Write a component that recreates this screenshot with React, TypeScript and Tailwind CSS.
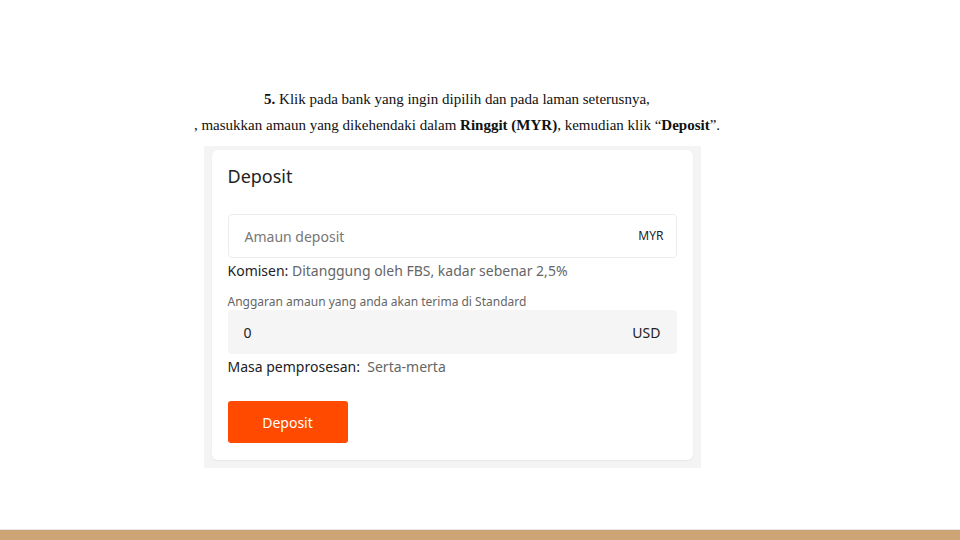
export default function App() {
  return (
    <div className="flex h-[540px] w-[960px] flex-col bg-white">
      <div className="flex flex-1 flex-col items-center pr-[46px] pt-[86px]">
        <div className="text-center font-['Liberation_Serif',serif] text-[15px] leading-[26px] text-[#111]">
          <p>
            <b>5.</b> Klik pada bank yang ingin dipilih dan pada laman seterusnya,
          </p>
          <p>
            , masukkan amaun yang dikehendaki dalam <b>Ringgit (MYR)</b>, kemudian klik “<b>Deposit</b>”.
          </p>
        </div>

        <div className="mr-[10px] mt-[8px] w-[497px] bg-[#f4f4f4] px-[8px] pb-[8px] pt-[4px] font-['Noto_Sans','Open_Sans',sans-serif]">
          <div className="rounded-[6px] bg-white px-[16px] pb-[17px] pt-[12px] shadow-[0_1px_2px_rgba(0,0,0,0.06)]">
            <h1 className="text-[18px] leading-[28px] text-[#222]">Deposit</h1>

            <div className="mt-[24px] flex h-[44px] items-center justify-between rounded-[4px] border border-[#ececec] pl-[16px] pr-[12px]">
              <span className="text-[14px] text-[#777]">Amaun deposit</span>
              <span className="text-[12px] text-[#222]">MYR</span>
            </div>

            <p className="mt-[3px] text-[14px] leading-[20px] text-[#222]">
              Komisen: <span className="text-[#666]">Ditanggung oleh FBS, kadar sebenar 2,5%</span>
            </p>

            <p className="mt-[13px] text-[12px] leading-[16px] text-[#666]">
              Anggaran amaun yang anda akan terima di Standard
            </p>

            <div className="flex h-[44px] items-center justify-between rounded-[4px] bg-[#f5f5f5] px-[16px]">
              <span className="text-[14px] text-[#222]">0</span>
              <span className="text-[14px] text-[#222]">USD</span>
            </div>

            <p className="mt-[1px] text-[14px] leading-[24px] text-[#222]">
              Masa pemprosesan:&nbsp; <span className="text-[#666]">Serta-merta</span>
            </p>

            <button className="mt-[22px] flex h-[42px] w-[120px] items-center justify-center rounded-[3px] bg-[#ff4a00] text-[14px] text-white">
              Deposit
            </button>
          </div>
        </div>
      </div>
      <div className="h-px bg-[#e6e6e6]" />
      <div className="h-[10px] bg-[#cda476]" />
    </div>
  );
}
